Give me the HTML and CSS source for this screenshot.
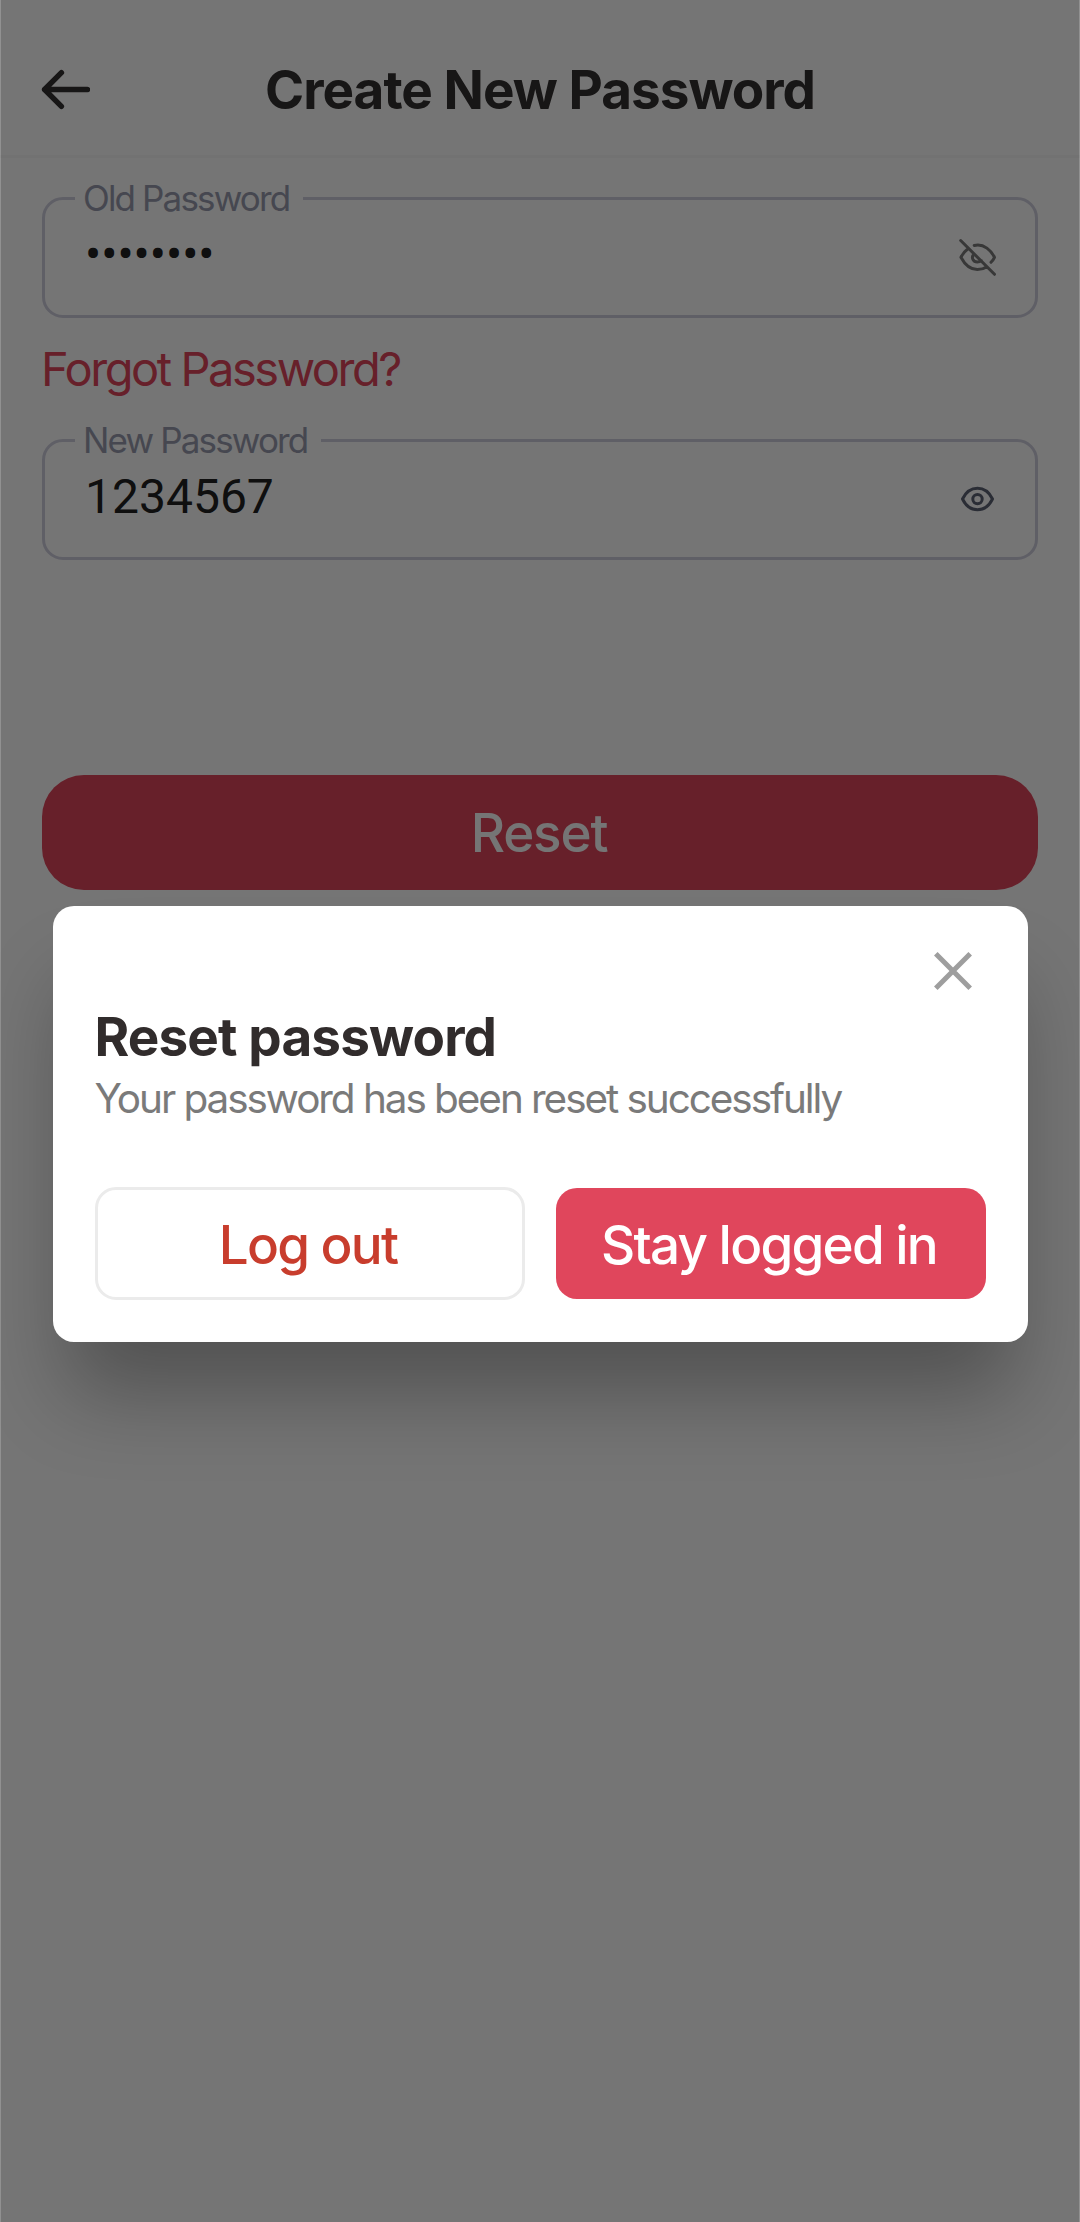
FILE: index.html
```html
<!DOCTYPE html>
<html lang="en">
<head>
<meta charset="utf-8">
<title>Create New Password</title>
<link rel="stylesheet" href="styles.css">
</head>
<body>
<div class="screen">
  <header class="header">
    <svg class="back" viewBox="0 0 48 40" fill="none" stroke="#343030" stroke-width="5.300" stroke-linecap="round" stroke-linejoin="round"><path d="M45.500 20H3.500M20 3.500L3.500 20L20 36.500"/></svg>
    <h1 class="title">Create New Password</h1>
  </header>
  <main class="form">
    <fieldset class="field">
      <legend class="label">Old Password</legend>
      <div class="row">
        <span class="value">••••••••</span>
        <svg class="eye" viewBox="0 0 56 56" fill="none" stroke="#7a7a7a" stroke-width="3" stroke-linecap="round" stroke-linejoin="round"><path d="M10.700 10.500L44.500 44.300M18 18.800C14.500 21.500 12 25 10.900 27.300C14.500 34 20 39.600 27.300 39.600C31 39.600 34 38.800 37 36.800M24.200 15.500C34 13 41.500 21 44.500 27.300C43.500 29.500 42.300 31 41 32.300M23.800 24.200C20.800 27.500 23.200 32 27.300 32C29 32 30.500 31.300 31.300 30.500"/></svg>
      </div>
    </fieldset>
    <a class="forgot">Forgot Password?</a>
    <fieldset class="field">
      <legend class="label">New Password</legend>
      <div class="row">
        <span class="value">1234567</span>
        <svg class="eye" viewBox="0 0 56 56" fill="none" stroke="#5d6275" stroke-width="3" stroke-linejoin="round"><path d="M12.500 27C19.500 12.800 35.500 12.800 42.500 27C35.500 41.400 19.500 41.400 12.500 27Z"/><circle cx="27.500" cy="27.100" r="4.700"/></svg>
      </div>
    </fieldset>
    <button class="reset">Reset</button>
  </main>
</div>
<div class="overlay">
  <section class="dialog">
    <svg class="close" viewBox="0 0 38 38" stroke="#9e9e9e" stroke-width="5"><path d="M1.800 1.800L36.200 36.200M36.200 1.800L1.800 36.200"/></svg>
    <h2 class="heading">Reset password</h2>
    <p class="message">Your password has been reset successfully</p>
    <div class="actions">
      <button class="btn btn-outline">Log out</button>
      <button class="btn btn-solid">Stay logged in</button>
    </div>
  </section>
</div>
</body>
</html>
```
FILE: styles.css
```css
* { box-sizing: border-box; margin: 0; padding: 0; }
body { width: 1080px; height: 2222px; overflow: hidden; background: #fff; font-family: Inter, sans-serif; }
.screen { height: 2222px; padding: 0 42px; }
.header { display: flex; align-items: center; justify-content: center; height: 158px; margin: 0 -42px; padding-top: 24px; border-bottom: 3px solid #f9f9f9; position: relative; }
.back { position: absolute; left: 41px; top: 69px; width: 49px; height: 41px; }
.title { font-size: 53px; font-weight: 700; line-height: 64px; letter-spacing: -.97px; color: #343030; white-space: nowrap; }
.form { display: flex; flex-direction: column; padding-top: 19px; }
.field { height: 141px; border: 3px solid #d0cfde; border-radius: 21px; padding: 0 29px 0 40px; }
.label { margin-left: -10px; padding: 0 14px 0 8px; font-size: 35px; line-height: 43px; letter-spacing: -1.85px; color: #989cae; }
.row { display: flex; justify-content: space-between; align-items: flex-start; }
.value { padding-top: 7px; font-family: Roboto, sans-serif; font-size: 48px; line-height: 56px; color: #212121; }
.eye { width: 56px; height: 56px; margin-top: 10px; }
.forgot { height: 101px; margin-left: -1px; padding-top: 23px; font-size: 47px; line-height: 56px; letter-spacing: -2.45px; color: #e0465c; }
.reset { height: 115px; margin-top: 215px; padding-right: 2px; border: 0; border-radius: 42px; background: #e0465c; color: #fff; font: 500 53px/64px Inter, sans-serif; letter-spacing: -1.2px; }
.overlay { position: absolute; inset: 0; display: flex; align-items: center; justify-content: center; padding-top: 26px; border: solid rgba(0, 0, 0, .43); border-width: 0 1px; background: rgba(0, 0, 0, .54) padding-box; }
.dialog { display: flex; flex-direction: column; width: 975px; height: 436px; padding: 46px 42px 42px; border-radius: 21px; background: #fff; box-shadow: 0 65px 84px -14px rgba(0, 0, 0, .3); }
.close { align-self: flex-end; width: 38px; height: 38px; margin-right: 14px; flex: none; }
.heading { margin-top: 15px; font-size: 53px; line-height: 64px; font-weight: 700; letter-spacing: -.85px; color: #312c2c; }
.message { margin-top: 5px; font-size: 40.5px; line-height: 50px; letter-spacing: -2.07px; color: #7a7a7a; white-space: nowrap; }
.actions { display: grid; grid-template-columns: 1fr 1fr; align-items: center; gap: 31px; margin-top: auto; }
.btn { height: 111px; padding: 2px 3px 0 0; border: 0; border-radius: 21px; font: 500 53px/64px Inter, sans-serif; letter-spacing: -1.78px; white-space: nowrap; }
.btn-outline { height: 113px; border: 3px solid #ebebeb; background: #fff; color: #c83d2d; }
.btn-solid { background: #e0465c; color: #fff; }
```
